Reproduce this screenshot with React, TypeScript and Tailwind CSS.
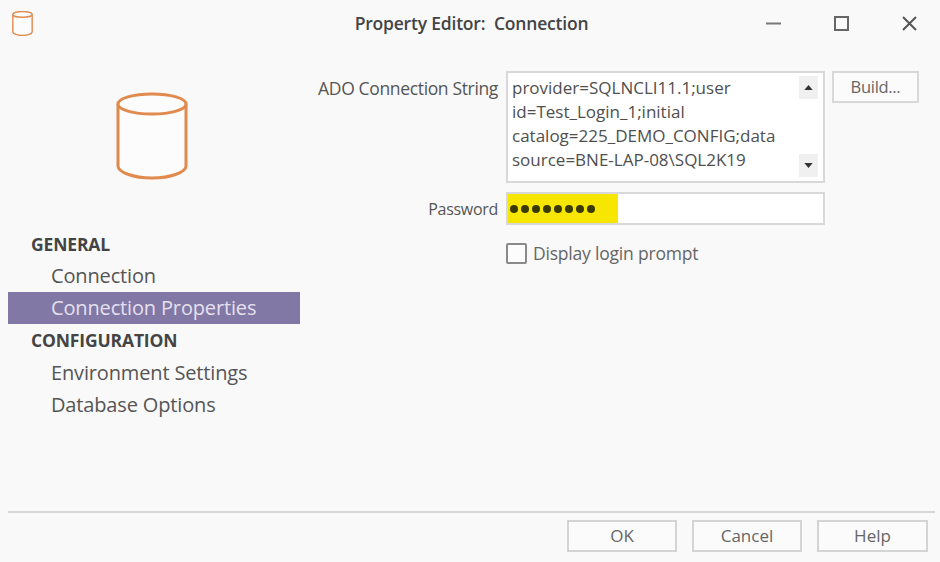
import React from 'react';

const CylinderIcon: React.FC<{ className: string; width: number }> = ({ className, width }) => (
  <svg viewBox="0 0 72 88" className={className} fill="none" stroke="#e08a4e" strokeWidth={width}>
    <path d="M2 12v62c0 6 15 12 34 12s34-6 34-12V12" fill="#fcfcfc" />
    <ellipse cx="36" cy="12" rx="34" ry="10" fill="#fcfcfc" />
  </svg>
);

const NavItem: React.FC<{ label: string; active?: boolean }> = ({ label, active }) => (
  <div
    className={`h-[32px] flex items-center pl-[43px] text-[20px] tracking-[-0.15px] ${
      active ? 'bg-[#8278a6] text-[#e4e0ee]' : 'text-[#555555]'
    }`}
  >
    {label}
  </div>
);

const NavHeading: React.FC<{ label: string }> = ({ label }) => (
  <div className="h-[32px] flex items-center pl-[23px] text-[17.5px] font-bold tracking-[-0.15px] text-[#444444]">
    {label}
  </div>
);

const FooterButton: React.FC<{ label: string; className: string }> = ({ label, className }) => (
  <button className={`h-[32px] border-2 border-[#d4d4d4] bg-[#fbfbfb] text-[17px] text-[#666666] ${className}`}>
    {label}
  </button>
);

const ScrollArrow: React.FC<{ up?: boolean }> = ({ up }) => (
  <div className="w-[19px] h-[23px] bg-[#f0f0f0] flex items-center justify-center">
    <svg viewBox="0 0 10 6" className="w-[9px] h-[5px]" fill="#333333">
      <path d={up ? 'M5 0l5 6H0z' : 'M0 0h10L5 6z'} />
    </svg>
  </div>
);

const App: React.FC = () => {
  return (
    <div className="w-[940px] h-[562px] bg-[#f9f9f9] flex flex-col overflow-hidden font-['Open_Sans',sans-serif]">
      {/* title bar */}
      <div className="h-[46px] shrink-0 flex items-center pl-[12px] pr-[23px]">
        <CylinderIcon className="w-[21px] h-[25px]" width={5} />
        <div className="flex-1 text-center pl-[144px] text-[17.5px] font-semibold tracking-[-0.2px] text-[#444444] whitespace-pre">
          Property Editor:  Connection
        </div>
        <div className="flex items-center gap-[53px]">
          <svg viewBox="0 0 15 15" className="w-[15px] h-[15px]" stroke="#777777" strokeWidth="2">
            <path d="M0 7.5h15" />
          </svg>
          <svg viewBox="0 0 15 15" className="w-[15px] h-[15px]" fill="none" stroke="#666666" strokeWidth="2">
            <rect x="1" y="1" width="13" height="13" />
          </svg>
          <svg viewBox="0 0 15 15" className="w-[15px] h-[15px]" stroke="#555555" strokeWidth="2">
            <path d="M1 1l13 13M14 1L1 14" />
          </svg>
        </div>
      </div>

      {/* main */}
      <div className="flex-1 flex">
        <div className="w-[292px] ml-[8px] shrink-0 flex flex-col">
          <div className="h-[46px]" />
          <div className="h-[136px] flex justify-center pr-[4px]">
            <CylinderIcon className="w-[72px] h-[88px]" width={3} />
          </div>
          <NavHeading label="GENERAL" />
          <NavItem label="Connection" />
          <NavItem label="Connection Properties" active />
          <NavHeading label="CONFIGURATION" />
          <div className="pt-[1px]">
            <NavItem label="Environment Settings" />
            <NavItem label="Database Options" />
          </div>
        </div>

        <div className="pt-[25px] pl-[1px] grid grid-cols-[197px_318px_87px] gap-x-[8px] content-start text-[#555555]">
          <div className="text-right pt-[4px] text-[17.5px] tracking-[-0.35px] whitespace-nowrap">
            ADO Connection String
          </div>
          <div className="h-[112px] -mr-[1px] border-2 border-[#d8d8d8] bg-white flex justify-between pl-[4px] pr-[5px] pt-[3px] pb-[4px]">
            <div className="text-[17px] leading-[24px] text-[#4f4f4f] w-[280px] whitespace-nowrap">
              <div>provider=SQLNCLI11.1;user</div>
              <div>id=Test_Login_1;initial</div>
              <div>catalog=225_DEMO_CONFIG;data</div>
              <div>source=BNE-LAP-08\SQL2K19</div>
            </div>
            <div className="flex flex-col justify-between">
              <ScrollArrow up />
              <ScrollArrow />
            </div>
          </div>
          <button className="h-[32px] border-2 border-[#d8d8d8] bg-[#fbfbfb] text-[16.5px] tracking-[-0.3px] text-[#666666]">
            Build...
          </button>

          <div className="mt-[9px] h-[33px] pt-[1px] flex items-center justify-end text-[16px] tracking-[-0.3px]">
            Password
          </div>
          <div className="mt-[9px] h-[33px] -mr-[1px] border-2 border-[#d8d8d8] bg-white">
            <div className="w-[110px] h-full bg-[#f7e600] flex items-center pl-[2px] gap-[3px]">
              {[0, 1, 2, 3, 4, 5, 6, 7].map((i) => (
                <span key={i} className="w-[8px] h-[8px] rounded-full bg-[#3a3a00]" />
              ))}
            </div>
          </div>
          <div />

          <div />
          <div className="mt-[15px] flex items-center gap-[6px]">
            <div className="w-[21px] h-[21px] border-2 border-[#8a8a8a] rounded-[2px] bg-[#fcfcfc]" />
            <span className="text-[17.5px] tracking-[-0.2px] text-[#666666]">Display login prompt</span>
          </div>
        </div>
      </div>

      {/* footer */}
      <div className="h-[51px] shrink-0 flex flex-col">
        <div className="h-[2px] ml-[8px] mr-[5px] bg-[#d8d8d8]" />
        <div className="flex justify-end gap-[15px] pt-[7px] pr-[12px]">
          <FooterButton label="OK" className="w-[110px]" />
          <FooterButton label="Cancel" className="w-[110px]" />
          <FooterButton label="Help" className="w-[111px]" />
        </div>
      </div>
    </div>
  );
};

export default App;
